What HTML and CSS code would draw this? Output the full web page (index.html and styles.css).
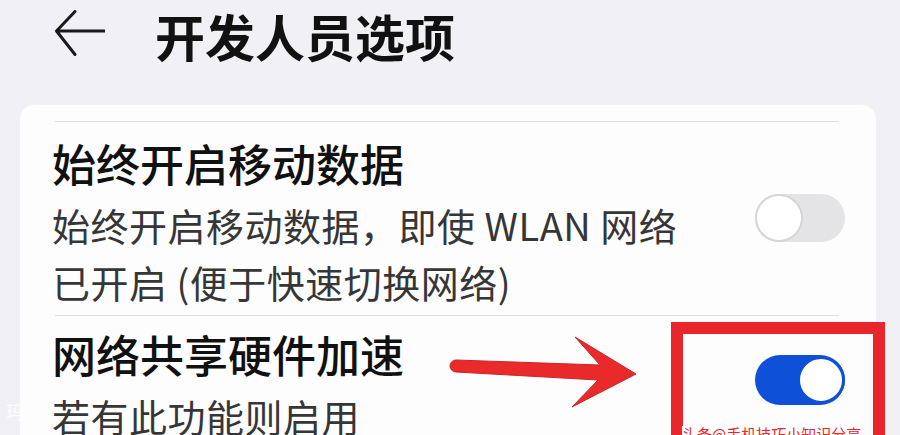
FILE: index.html
```html
<!DOCTYPE html>
<html lang="zh-CN">
<head>
    <meta charset="UTF-8">
    <meta name="viewport" content="width=device-width, initial-scale=1.0">
    <title>开发人员选项</title>
    <link rel="stylesheet" href="styles.css">
</head>
<body>

<div class="header">
    <svg class="back" viewBox="0 0 50 46" width="50" height="46">
        <path d="M1.5 21 H50 M20 1.5 L1.5 21 L20 44.5" fill="none" stroke="#1a1a1a" stroke-width="3" stroke-linecap="round" stroke-linejoin="round"/>
    </svg>
    <h1>开发人员选项</h1>
</div>

<div class="card">
    <div class="divider"></div>
    <div class="row row-first">
        <div class="text">
            <div class="title">始终开启移动数据</div>
            <div class="desc">始终开启移动数据，即使 WLAN 网络<br>已开启 (便于快速切换网络)</div>
        </div>
        <div class="switch"><span class="knob"></span></div>
    </div>
    <div class="divider"></div>
    <div class="row row-second">
        <div class="text">
            <div class="title">网络共享硬件加速</div>
            <div class="desc">若有此功能则启用</div>
        </div>
        <div class="switch on"><span class="knob"></span></div>
    </div>
</div>

<!-- red markup drawn over the screen -->
<svg class="arrow" viewBox="0 0 200 85" width="200" height="85">
    <path d="M16 30 L160 35 L135 7 L196 44 L132 77 L158 50 L16 42 A6 6 0 0 1 16 30 Z" fill="#ea2a2a" stroke="#c8262b" stroke-width="1"/>
</svg>
<div class="mark-box"></div>
<div class="mark-text">头条@手机技巧小知识分享</div>
<div class="corner-tag">玛</div>

</body>
</html>
```

FILE: styles.css
```css
body {
    font-family: "Noto Sans CJK SC", "Noto Sans", sans-serif;
    background-color: #f1f1f5;
    margin: 0;
    height: 435px;
    overflow: hidden;
    position: relative;
}

.header {
    display: flex;
    align-items: center;
    height: 70px;
    padding-left: 55px;
    gap: 50px;
}

.back {
    display: block;
    margin-top: -4px;
}

.header h1 {
    margin: 0;
    font-size: 50px;
    line-height: 50px;
    font-weight: 700;
    color: #111;
}

.card {
    margin: 35px 24px 0 20px;
    padding-top: 16px;
    background-color: #fdfdfe;
    border-radius: 14px 14px 0 0;
}

.divider {
    height: 1px;
    margin: 0 37px 0 35px;
    background-color: #dedee2;
}

.row {
    display: flex;
    align-items: center;
    justify-content: space-between;
    padding: 19px 31px 5px 32px;
}

.row-second {
    padding-top: 16px;
}

.title {
    font-size: 44px;
    line-height: 44px;
    font-weight: 500;
    color: #111;
}

.desc {
    margin-top: 11px;
    font-size: 38px;
    line-height: 57px;
    letter-spacing: 0.5px;
    color: #363636;
}

.switch {
    width: 90px;
    height: 48px;
    border-radius: 24px;
    background-color: #e4e4e6;
    margin-bottom: 16px;
    display: flex;
    align-items: center;
    flex-shrink: 0;
}

.switch .knob {
    width: 44px;
    height: 44px;
    border-radius: 50%;
    background-color: #fff;
    border: 2px solid #d6d6d8;
}

.switch.on {
    background-color: #0e50d8;
    justify-content: flex-end;
    height: 50px;
    border-radius: 25px;
}

.switch.on .knob {
    width: 42px;
    height: 42px;
    border: 3px solid #0e50d8;
}

.arrow {
    position: absolute;
    left: 440px;
    top: 330px;
}

.mark-box {
    position: absolute;
    left: 671px;
    top: 322px;
    width: 190px;
    height: 130px;
    border: 12px solid #e8262b;
}

.mark-text {
    position: absolute;
    left: 682px;
    top: 426px;
    font-size: 15px;
    line-height: 16px;
    color: #e8262b;
    background-color: #fff;
    white-space: nowrap;
}

.corner-tag {
    position: absolute;
    left: 6px;
    top: 398px;
    font-size: 18px;
    color: rgba(255, 255, 255, 0.85);
}
```
